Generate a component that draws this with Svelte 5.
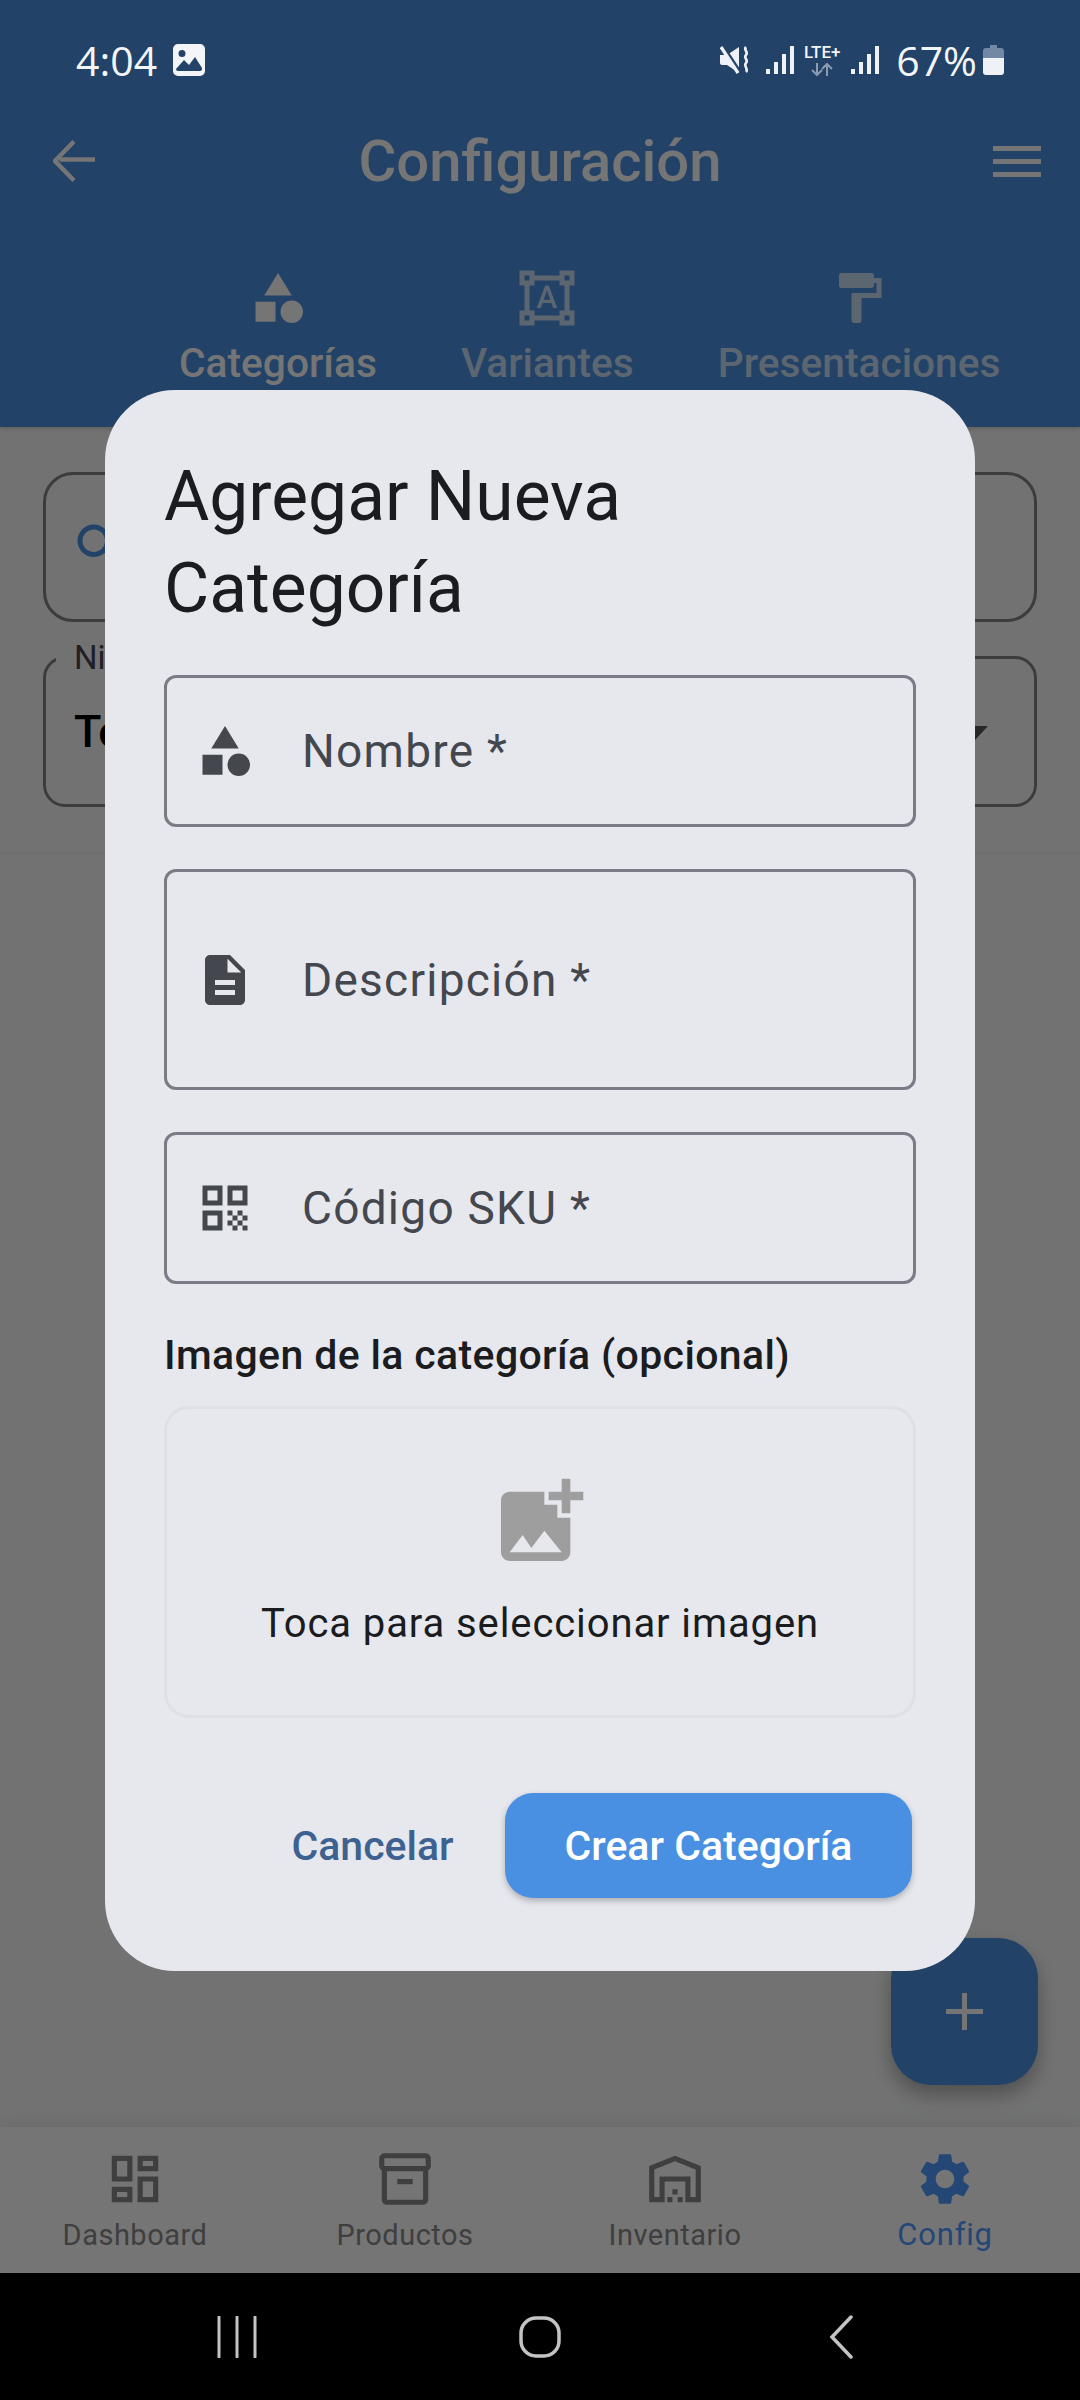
<script>
  const tabs = [
    { label: 'Categorías', size: 60, d: 'M12 2l-5.5 9h11zM3 13.5h8v8H3zM17.5 13a4.5 4.5 0 1 0 0 9 4.5 4.5 0 0 0 0-9z', active: true },
    { label: 'Variantes', size: 60, d: 'M23 7V1h-6v2H7V1H1v6h2v10H1v6h6v-2h10v2h6v-6h-2V7h2zM3 3h2v2H3V3zm2 18H3v-2h2v2zm12-2H7v-2H5V7h2V5h10v2h2v10h-2v2zm4 2h-2v-2h2v2zM19 5V3h2v2h-2zm-5.27 9h-3.49l-.73 2H7.89l3.4-9h1.4l3.41 9h-1.63l-.74-2zm-3.04-1.26h2.61L12 8.91l-1.31 3.83z' },
    { label: 'Presentaciones', size: 60, d: 'M18 4V3c0-.55-.45-1-1-1H5c-.55 0-1 .45-1 1v4c0 .55.45 1 1 1h12c.55 0 1-.45 1-1V6h1v4H9v11c0 .55.45 1 1 1h2c.55 0 1-.45 1-1v-9h8V4h-3z' }
  ];

  const fields = [
    { label: 'Nombre *', tall: false, d: 'M12 2l-5.5 9h11zM3 13.5h8v8H3zM17.5 13a4.5 4.5 0 1 0 0 9 4.5 4.5 0 0 0 0-9z' },
    { label: 'Descripción *', tall: true, d: 'M14 2H6c-1.1 0-1.99.9-1.99 2L4 20c0 1.1.89 2 1.99 2H18c1.1 0 2-.9 2-2V8l-6-6zm2 16H8v-2h8v2zm0-4H8v-2h8v2zm-3-5V3.5L18.5 9H13z' },
    { label: 'Código SKU *', tall: false, d: 'M3 11h8V3H3v8zm2-6h4v4H5V5zM3 21h8v-8H3v8zm2-6h4v4H5v-4zM13 3v8h8V3h-8zm6 6h-4V5h4v4zM19 19h2v2h-2zM13 13h2v2h-2zM15 15h2v2h-2zM13 17h2v2h-2zM15 19h2v2h-2zM17 17h2v2h-2zM17 13h2v2h-2zM19 15h2v2h-2z' }
  ];

  const navItems = [
    { label: 'Dashboard', d: 'M19 5v2h-4V5h4M9 5v6H5V5h4m10 8v6h-4v-6h4M9 17v2H5v-2h4M21 3h-8v6h8V3zM11 3H3v10h8V3zm10 8h-8v10h8V11zm-10 4H3v6h8v-6z' },
    { label: 'Productos', d: 'M20 2H4c-1 0-2 .9-2 2v3.01c0 .72.43 1.34 1 1.69V20c0 1.1 1.1 2 2 2h14c.9 0 2-.9 2-2V8.7c.57-.35 1-.97 1-1.69V4c0-1.1-1-2-2-2zm-1 18H5V9h14v11zm1-13H4V4h16v3zM9 12h6v2H9z' },
    { label: 'Inventario', d: 'M20 8.35V19h-2v-8H6v8H4V8.35l8-3.2 8 3.2zM22 21V7L12 3 2 7v14h6v-8h8v8h6zM11 19H9v2h2v-2zm2-3h-2v2h2v-2zm2 3h-2v2h2v-2z' },
    { label: 'Config', active: true, d: 'M19.14 12.94c.04-.3.06-.61.06-.94 0-.32-.02-.64-.07-.94l2.03-1.58c.18-.14.23-.41.12-.61l-1.92-3.32c-.12-.22-.37-.29-.59-.22l-2.39.96c-.5-.38-1.03-.7-1.62-.94l-.36-2.54c-.04-.24-.24-.41-.48-.41h-3.84c-.24 0-.43.17-.47.41l-.36 2.54c-.59.24-1.13.57-1.62.94l-2.39-.96c-.22-.08-.47 0-.59.22L2.74 8.87c-.12.21-.08.47.12.61l2.03 1.58c-.05.3-.09.63-.09.94s.02.64.07.94l-2.03 1.58c-.18.14-.23.41-.12.61l1.92 3.32c.12.22.37.29.59.22l2.39-.96c.5.38 1.03.7 1.62.94l.36 2.54c.05.24.24.41.48.41h3.84c.24 0 .44-.17.47-.41l.36-2.54c.59-.24 1.13-.56 1.62-.94l2.39.96c.22.08.47 0 .59-.22l1.92-3.32c.12-.22.07-.47-.12-.61l-2.01-1.58zM12 15.6c-1.98 0-3.6-1.62-3.6-3.6s1.62-3.6 3.6-3.6 3.6 1.62 3.6 3.6-1.62 3.6-3.6 3.6z' }
  ];
</script>

<div class="screen">
  <div class="page">
    <header class="appbar">
      <div class="toolbar">
        <svg class="back" viewBox="0 0 42 42"><path d="M42 19.5H6.5M21 1.5L2 21l19 19.5" fill="none" stroke="currentColor" stroke-width="4.5" /></svg>
        <h1>Configuración</h1>
        <svg class="menu" viewBox="0 0 48 31"><path d="M0 0h48v5H0zM0 13h48v5H0zM0 26h48v5H0z" fill="currentColor" /></svg>
      </div>
      <div class="tabs">
        {#each tabs as tab}
          <div class="tab" class:active={tab.active}>
            <svg viewBox="0 0 24 24" width={tab.size} height={tab.size}><path d={tab.d} fill="currentColor" /></svg>
            <span>{tab.label}</span>
          </div>
        {/each}
      </div>
    </header>

    <main class="filters">
      <div class="search">
        <svg viewBox="0 0 24 24" width="60" height="60"><path d="M15.5 14h-.79l-.28-.27C15.41 12.59 16 11.11 16 9.5 16 5.91 13.09 3 9.5 3S3 5.91 3 9.5 5.91 16 9.5 16c1.61 0 3.09-.59 4.23-1.57l.27.28v.79l5 4.99L20.49 19l-4.99-5zm-6 0C7.01 14 5 11.99 5 9.5S7.01 5 9.5 5 14 7.01 14 9.5 11.99 14 9.5 14z" fill="currentColor" /></svg>
      </div>
      <div class="select">
        <span class="legend">Nivel</span>
        <span class="value">Todos</span>
        <i class="caret"></i>
      </div>
    </main>
    <div class="divider"></div>
    <div class="list"></div>

    <button class="fab" type="button" aria-label="Agregar">
      <svg viewBox="0 0 37 37" width="37" height="37"><path d="M16 0h5v16h16v5H21v16h-5V21H0v-5h16z" fill="currentColor" /></svg>
    </button>

    <nav class="bottom">
      {#each navItems as item}
        <div class="nav-item" class:active={item.active}>
          <svg viewBox="0 0 24 24" width="62" height="62"><path d={item.d} fill="currentColor" /></svg>
          <span>{item.label}</span>
        </div>
      {/each}
    </nav>
  </div>

  <div class="scrim">
    <section class="dialog">
      <h2>Agregar Nueva Categoría</h2>
      <div class="fields">
        {#each fields as field}
          <div class="field" class:tall={field.tall}>
            <svg viewBox="0 0 24 24" width="60" height="60"><path d={field.d} fill="currentColor" /></svg>
            <span>{field.label}</span>
          </div>
        {/each}
      </div>
      <p class="image-label">Imagen de la categoría (opcional)</p>
      <div class="upload">
        <svg viewBox="0 0 24 24" width="104" height="104"><path d="M19 7v2.99s-1.99.01-2 0V7h-3s.01-1.99 0-2h3V2h2v3h3v2h-3zm-3 4V8h-3V5H5c-1.1 0-2 .9-2 2v12c0 1.1.9 2 2 2h12c1.1 0 2-.9 2-2v-8h-3zM5 19l3-4 2 3 3-4 4 5H5z" fill="currentColor" /></svg>
        <span>Toca para seleccionar imagen</span>
      </div>
      <div class="actions">
        <button class="text-btn" type="button">Cancelar</button>
        <button class="primary" type="button">Crear Categoría</button>
      </div>
    </section>
  </div>

  <div class="statusbar">
    <div class="status-left">
      <span class="time">4:04</span>
      <svg viewBox="0 0 32 32" width="32" height="32"><path fill-rule="evenodd" d="M5 0h22a5 5 0 0 1 5 5v22a5 5 0 0 1-5 5H5a5 5 0 0 1-5-5V5a5 5 0 0 1 5-5zM3 25l8-9 5 5 6-8 7 11v1a2 2 0 0 1-2 2H5a2 2 0 0 1-2-2zM9 6a3.5 3.5 0 1 0 0 7 3.5 3.5 0 0 0 0-7z" fill="#f3f5f8" /></svg>
    </div>
    <div class="status-right">
      <svg viewBox="0 0 30 28" width="30" height="28"><path d="M0 9h7l12-8v26L7 19H2c-1 0-2-1-2-2z" fill="#eef1f5" /><path d="M3 0l18 27" stroke="#234268" stroke-width="3" /><path d="M1 1l17 26" stroke="#eef1f5" stroke-width="3.2" /><path d="M26 1c-3 3 3 5 0 8s3 5 0 8 3 6 0 9" fill="none" stroke="#eef1f5" stroke-width="2.6" /></svg>
      <svg class="signal" viewBox="0 0 28 28" width="28" height="28"><path d="M0 23h4v5H0zM8 16h4v12H8zM16 8h4v20h-4zM24 0h4v28h-4z" fill="#eef1f5" /></svg>
      <div class="lte">
        <span>LTE+</span>
        <svg viewBox="0 0 22 13" width="22" height="13"><path d="M6 0v12M1 7l5 5 5-5M16 13V1M11 6l5-5 5 5" fill="none" stroke="#8b9bb0" stroke-width="2" /></svg>
      </div>
      <svg class="signal" viewBox="0 0 28 28" width="28" height="28"><path d="M0 23h4v5H0zM8 16h4v12H8zM16 8h4v20h-4zM24 0h4v28h-4z" fill="#eef1f5" /></svg>
      <span class="pct">67%</span>
      <svg viewBox="0 0 21 30" width="21" height="30"><path d="M7 0h7v3h4a3 3 0 0 1 3 3v7H0V6a3 3 0 0 1 3-3h4z" fill="#7288a4" /><path d="M0 13h21v14a3 3 0 0 1-3 3H3a3 3 0 0 1-3-3z" fill="#eef1f5" /></svg>
    </div>
  </div>

  <div class="sysnav">
    <svg viewBox="0 0 40 42" width="40" height="42"><path d="M2 1v40M20 1v40M38 1v40" stroke="#c4c4c4" stroke-width="3" stroke-linecap="round" /></svg>
    <svg class="home" viewBox="0 0 42 42" width="42" height="42"><rect x="2" y="2" width="38" height="38" rx="15" fill="none" stroke="#c4c4c4" stroke-width="3.5" /></svg>
    <svg class="prev" viewBox="0 0 24 44" width="24" height="44"><path d="M22 2L3 22l19 20" fill="none" stroke="#c4c4c4" stroke-width="3.5" stroke-linecap="round" /></svg>
  </div>
</div>

<style>
  :global(body) {
    margin: 0;
    background: #000;
  }

  .screen {
    position: relative;
    width: 1080px;
    height: 2400px;
    overflow: hidden;
    font-family: Roboto, "Noto Sans", sans-serif;
  }

  .page {
    position: relative;
    height: 2273px;
    display: flex;
    flex-direction: column;
    background: #f8f9fa;
  }

  .appbar {
    height: 427px;
    box-sizing: border-box;
    padding-top: 118px;
    background: #4a90e2;
    color: #fff;
    box-shadow: 0 2px 4px rgba(0, 0, 0, 0.15);
  }

  .toolbar {
    display: grid;
    grid-template-columns: 1fr auto 1fr;
    align-items: center;
    height: 86px;
    padding: 0 39px;
  }

  .back {
    width: 42px;
    height: 42px;
    margin-left: 14px;
  }

  .menu {
    width: 48px;
    height: 31px;
    justify-self: end;
  }

  h1 {
    margin: 0;
    font-size: 58px;
    font-weight: 500;
    line-height: 86px;
  }

  .tabs {
    display: flex;
    gap: 84px;
    margin: 64px 0 0 179px;
  }

  .tab {
    display: flex;
    flex-direction: column;
    align-items: center;
    font-size: 40.7px;
    font-weight: 500;
    line-height: 48px;
    opacity: 0.7;
  }

  .tab.active {
    opacity: 1;
  }

  .tab svg {
    margin-bottom: 11px;
  }

  .filters {
    display: flex;
    flex-direction: column;
    gap: 34px;
    padding: 45px 43px 45px;
  }

  .search,
  .select {
    position: relative;
    box-sizing: border-box;
    height: 151px;
    border: 3px solid #848484;
    display: flex;
    align-items: center;
  }

  .search {
    height: 150px;
    border-radius: 30px;
    padding-left: 24px;
    color: #4a90e2;
  }

  .select {
    border-radius: 22px;
    padding: 0 28px;
  }

  .legend {
    position: absolute;
    left: 10px;
    top: -19px;
    padding: 0 8px 0 18px;
    background: #f8f9fa;
    font-size: 33px;
    line-height: 36px;
    color: #49454f;
  }

  .value {
    font-size: 45px;
    font-weight: 500;
    color: #000;
  }

  .caret {
    position: absolute;
    right: 46px;
    top: 67px;
    width: 0;
    height: 0;
    border-left: 13px solid transparent;
    border-right: 13px solid transparent;
    border-top: 14px solid #555;
  }

  .divider {
    height: 2px;
    background: #efefef;
  }

  .list {
    flex: 1;
  }

  .fab {
    position: absolute;
    left: 891px;
    top: 1938px;
    width: 147px;
    height: 147px;
    border: 0;
    border-radius: 40px;
    background: #4a90e2;
    color: #fff;
    display: flex;
    align-items: center;
    justify-content: center;
    padding: 0;
    box-shadow: 0 10px 20px rgba(0, 0, 0, 0.3);
  }

  .bottom {
    height: 146px;
    display: grid;
    grid-template-columns: repeat(4, 270px);
    background: #fff;
    color: #8a8a8a;
    box-shadow: 0 -4px 16px rgba(0, 0, 0, 0.08);
  }

  .nav-item {
    display: flex;
    flex-direction: column;
    align-items: center;
    padding-top: 21px;
    font-size: 29px;
    line-height: 36px;
    letter-spacing: 0.5px;
  }

  .nav-item.active {
    color: #4f9bff;
    font-size: 31px;
    letter-spacing: 0.8px;
  }

  .nav-item svg {
    margin-bottom: 7px;
  }

  .scrim {
    position: absolute;
    left: 0;
    top: 0;
    right: 0;
    height: 2273px;
    background: rgba(0, 0, 0, 0.54);
    padding: 390px 105px 0;
    box-sizing: border-box;
  }

  .dialog {
    height: 1581px;
    box-sizing: border-box;
    padding: 61px 59px 0;
    border-radius: 70px;
    background: #e6e8ee;
    color: #1a1c20;
  }

  h2 {
    margin: 0;
    width: 520px;
    font-size: 69.5px;
    font-weight: 400;
    line-height: 92px;
  }

  .fields {
    display: flex;
    flex-direction: column;
    gap: 42px;
    margin-top: 40px;
  }

  .field {
    box-sizing: border-box;
    height: 152px;
    border: 3px solid #797c86;
    border-radius: 12px;
    display: flex;
    align-items: center;
    gap: 47px;
    padding-left: 28px;
    color: #44474e;
    font-size: 46px;
    letter-spacing: 1.25px;
  }

  .field.tall {
    height: 221px;
  }

  .image-label {
    margin: 41px 0 0;
    font-size: 41px;
    font-weight: 500;
    line-height: 60px;
    letter-spacing: 0.36px;
  }

  .upload {
    box-sizing: border-box;
    height: 312px;
    margin-top: 21px;
    border: 3px solid #dfe0e5;
    border-radius: 25px;
    display: flex;
    flex-direction: column;
    align-items: center;
    padding-top: 61px;
    font-size: 40px;
    letter-spacing: 0.9px;
  }

  .upload svg {
    color: #9e9e9e;
    margin-bottom: 26px;
  }

  .actions {
    display: flex;
    align-items: center;
    justify-content: flex-end;
    margin-top: 75px;
    padding-right: 4px;
  }

  .actions button {
    border: 0;
    font-family: inherit;
    font-size: 41px;
    font-weight: 500;
    padding: 0;
  }

  .text-btn {
    width: 213px;
    margin-right: 26px;
    background: none;
    color: #3d6291;
  }

  .primary {
    width: 407px;
    height: 105px;
    border-radius: 28px;
    background: #4a90e2;
    color: #fff;
    box-shadow: 0 3px 6px rgba(0, 0, 0, 0.25);
  }

  .statusbar {
    position: absolute;
    left: 0;
    right: 0;
    top: 44px;
    height: 32px;
    padding: 0 76px 0 76px;
    display: flex;
    justify-content: space-between;
    align-items: center;
    color: #f3f5f8;
  }

  .status-left,
  .status-right {
    display: flex;
    align-items: center;
  }

  .status-left {
    gap: 16px;
  }

  .time,
  .pct {
    font-family: "Open Sans", Roboto, sans-serif;
    font-size: 41px;
    line-height: 32px;
  }

  .status-right svg {
    flex: none;
  }

  .signal {
    margin-left: 16px;
  }

  .lte {
    display: flex;
    flex-direction: column;
    align-items: center;
    width: 38px;
    margin-left: 9px;
    margin-right: -6px;
    font-size: 17px;
    line-height: 14px;
    font-weight: 500;
  }

  .lte svg {
    margin-top: 4px;
  }

  .pct {
    margin: 0 6px 0 17px;
  }

  .sysnav {
    position: absolute;
    left: 0;
    right: 0;
    bottom: 0;
    height: 127px;
    background: #000;
    display: flex;
    align-items: center;
    padding-left: 217px;
    box-sizing: border-box;
  }

  .home {
    margin-left: 262px;
  }

  .prev {
    margin-left: 268px;
  }
</style>
